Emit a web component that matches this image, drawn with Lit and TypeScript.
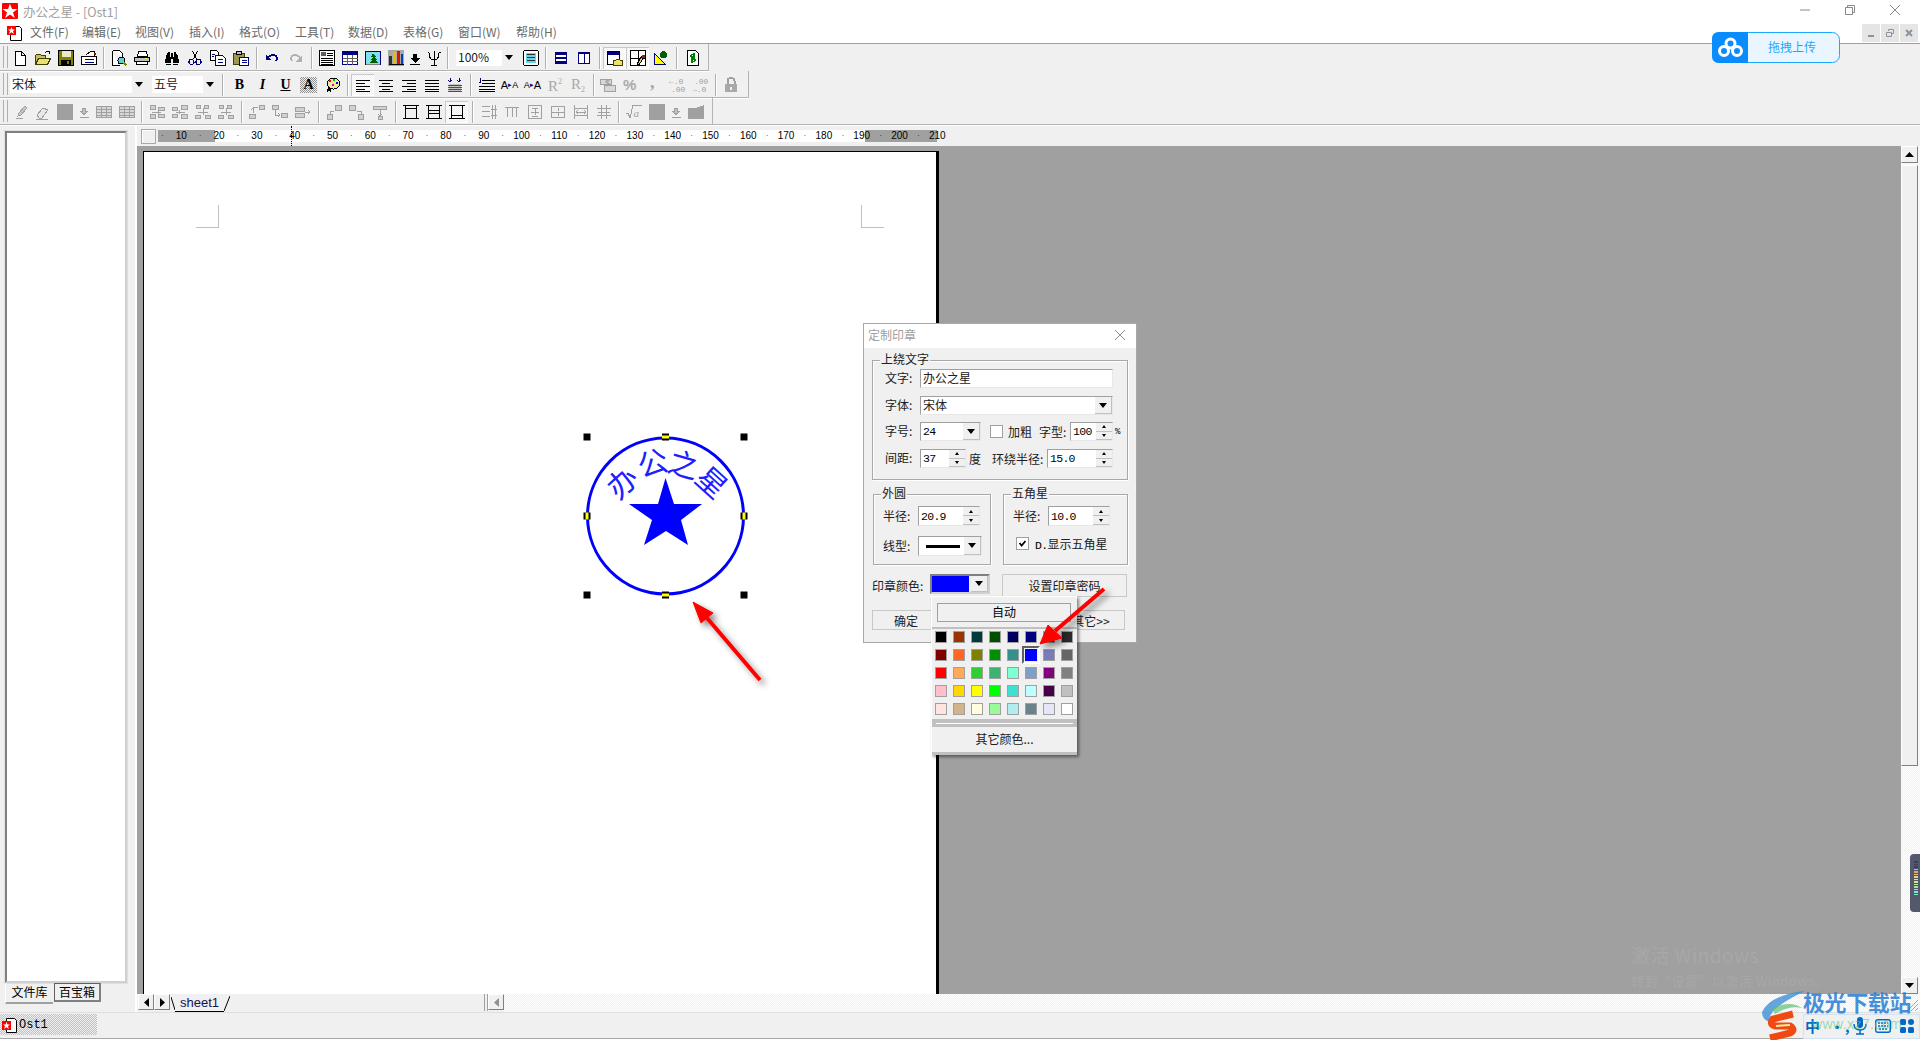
import { LitElement, css, html, svg } from 'lit';
import { customElement } from 'lit/decorators.js';

const dither = css`repeating-conic-gradient(#fff 0 25%, #f0f0f0 0 50%) 0 0 / 2px 2px`;

const ic = (f: unknown) => html`<svg class="ic" viewBox="0 0 16 16" width="16" height="16">${f}</svg>`;

// grey (disabled) icons share one stroke
const dim = (d: string, fill = 'none') => svg`<path d=${d} fill=${fill} stroke="#a0a0a0"/>`;

const I: Record<string, unknown> = {
  new: svg`<path d="M3.5 1.5h6l3.5 3.5v10h-9.5zM9.5 1.5v3.5h3.5" fill="#fff" stroke="#000"/>`,
  open: svg`<path d="M.5 14.5v-9l1-1h4l1 1h4v2" fill="#c8c060" stroke="#404000"/><path d="M.5 14.5l3-6h12l-3 6z" fill="#e8e070" stroke="#404000"/><path d="M9.5 3.5q2-3 4-1M12 1h2v2.500" fill="none" stroke="#000"/>`,
  save: svg`<path d="M.5 .5h15v15h-15z" fill="#808000" stroke="#000"/><path d="M3.500 1h9v6h-9z" fill="#e8e8c8"/><path d="M3 10h10v5h-10z" fill="#000"/><path d="M9 11h2v3h-2z" fill="#808000"/>`,
  setup: svg`<path d="M5.500 4.500l4-3h4v5" fill="#fff" stroke="#000"/><path d="M.5 6.500h15v8h-15z" fill="#fff" stroke="#000"/><path d="M3.500 9.500h9M3.500 12h9" stroke="#000080"/><path d="M13 3h2v2h-2z" fill="#a00000"/>`,
  preview: svg`<path d="M1.500 .5h7l3 3v4M1.500 .5v15h7" fill="#fff" stroke="#000"/><circle cx="10.500" cy="10.500" r="3.500" fill="#60d0d0" stroke="#000"/><path d="M13 13l2.500 2.500" stroke="#808000" stroke-width="2"/>`,
  print: svg`<path d="M4.500 1.500h8l1 5h-10z" fill="#fff" stroke="#000"/><path d="M.5 7.500h15v4h-15z" fill="#c0c0c0" stroke="#000"/><path d="M2.500 11.500h11v3h-11z" fill="#fff" stroke="#000"/><path d="M11 8h2v1h-2z" fill="#ff0"/>`,
  find: svg`<path d="M1 13l1-8h1l1-3h2v5h1V3h2v4h1V2h2l1 3h1l1 8h-6V9h-2v4z" fill="#000"/><path d="M2 14h5M9 14h5" stroke="#000"/>`,
  cut: svg`<path d="M5.500 1l4 8M10.500 1l-4 8" stroke="#000" fill="none"/><circle cx="4.500" cy="12" r="2.500" fill="none" stroke="#000080" stroke-width="1.200"/><circle cx="11.500" cy="12" r="2.500" fill="none" stroke="#000080" stroke-width="1.200"/>`,
  copy: svg`<path d="M.5 .5h6l2 2v8h-8z" fill="#fff" stroke="#000"/><path d="M5.500 5.500h7l2.500 2.500v7.500h-9.500z" fill="#fff" stroke="#000080"/><path d="M7.500 9.500h5M7.500 12.500h5M2 4h3M2 6h2" stroke="#000080"/>`,
  paste: svg`<path d="M.5 3.500h11v11h-11z" fill="#a09850" stroke="#404000"/><path d="M3.500 1.500h5v3h-5z" fill="#c0c0c0" stroke="#000"/><path d="M6.500 7.500h9v8h-9z" fill="#fff" stroke="#000080"/><path d="M8.500 10.500h5M8.500 12.500h5" stroke="#000080"/>`,
  undo: svg`<path d="M3 9q4-6 9-3q2 2 0 5" fill="none" stroke="#000080" stroke-width="1.600"/><path d="M2 4v7h7z" fill="#000080" transform="scale(.8) translate(1 2)"/>`,
  redo: svg`<path d="M13 9q-4-6-9-3q-2 2 0 5" fill="none" stroke="#b0b0b0" stroke-width="1.600"/><path d="M14 4v7h-7z" fill="#b0b0b0" transform="scale(.9) translate(2 2)"/>`,
  text: svg`<path d="M.5 .5h15v15h-15z" fill="#fff" stroke="#000"/><path d="M2 2h5v4h-5z" fill="#606060"/><path d="M8 3h6M8 5h6M2 8h12M2 10h12M2 12h12M2 14h12" stroke="#000"/>`,
  table: svg`<path d="M.5 1.500h15v13h-15z" fill="#fff" stroke="#000080"/><path d="M1 2h14v3h-14z" fill="#000080"/><path d="M.5 8.500h15M.5 11.500h15M5.500 5v10M10.500 5v10" stroke="#606060"/>`,
  pic: svg`<path d="M.5 1.500h15v13h-15z" fill="#80e0f0" stroke="#000080"/><path d="M8 3l3 4h-2l3 3h-2l3 3h-9l3-3h-2l3-3h-2z" fill="#006000"/><path d="M1 14h14" stroke="#808080"/>`,
  chart: svg`<path d="M0 0h16v16h-16z" fill="#a8a8a8"/><path d="M1 6h3v8h-3z" fill="#303030"/><path d="M5 2h3v12h-3z" fill="#e0c000"/><path d="M9 1h3v13h-3z" fill="#e01000"/><path d="M12.500 4h2.500v10h-2.500z" fill="#0040c0"/><path d="M.5 14.500h15" stroke="#000"/>`,
  down: svg`<path d="M6 4h4v4h3l-5 5-5-5h3zM3 14h10v1H3z" fill="#000"/>`,
  psi: svg`<path d="M8 1v14M5 15h6M1.500 2q2 0 2 3q0 5 4.500 5q4.500 0 4.500-5q0-3 2-3" fill="none" stroke="#000"/>`,
  box: svg`<path d="M1.500 .5h13l1 1v13l-1 1h-13l-1-1v-13z" fill="#fff" stroke="#000"/><path d="M3 3h10v10h-10z" fill="#60d8e8"/><path d="M4 4.500h8M4 7.500h8M4 10.500h8" stroke="#303030"/>`,
  rows: svg`<path d="M2.500 2.500h11v11h-11z" fill="#fff" stroke="#000080"/><path d="M2 2h12v3h-12zM2 7h12v2h-12zM2 11h12v3h-12z" fill="#000080"/>`,
  cols: svg`<path d="M2.500 2.500h11v11h-11zM8 3v11" fill="#fff" stroke="#000080"/><path d="M2 2h12v2h-12z" fill="#000080"/>`,
  win: svg`<path d="M.5 1.500h12v13h-12z" fill="#fff" stroke="#000"/><path d="M1 2h11v3h-11z" fill="#000080"/><path d="M6.500 10.500h2l1-1h3l1 1h2v5h-9z" fill="#f0e070" stroke="#404000"/>`,
  pane: svg`<path d="M.5 .5h15v15h-15z" fill="#fff" stroke="#000"/><path d="M8 1v14M1 8h14" stroke="#000"/><path d="M7 14l5-8 2 1-5 8z" fill="#e8d040" stroke="#000"/><path d="M12 5h3v3h-3z" fill="#a02020"/>`,
  tri: svg`<path d="M1.500 3.500v11h11z" fill="#ff0" stroke="#000080"/><circle cx="10.500" cy="4.500" r="3.500" fill="#006000"/>`,
  sync: svg`<path d="M2.500 .5h8l3 3v12h-11z" fill="#fff" stroke="#000"/><path d="M5 7q1-3 4-2M9 3v4h-3M11 9q-1 3-4 2M7 13v-4h3" fill="none" stroke="#008000" stroke-width="1.300"/>`,
  palette: svg`<ellipse cx="9.500" cy="6.500" rx="6" ry="5.500" fill="#f0e8a0" stroke="#000"/><path d="M5 3h2v2h-2z" fill="#f00"/><path d="M9 2h2v2h-2z" fill="#00c000"/><path d="M12 5h2v2h-2z" fill="#00f"/><path d="M8 7h2v2h-2z" fill="#e000e0"/><path d="M3 15l2-5 2 5M3.500 13.500h3" fill="none" stroke="#000"/>`,
  left: svg`<path d="M1 3h14M1 6h9M1 9h14M1 12h9M1 14.500h14" stroke="#000"/>`,
  center: svg`<path d="M1 3h14M4 6h8M1 9h14M4 12h8M1 14.500h14" stroke="#000"/>`,
  right: svg`<path d="M1 3h14M6 6h9M1 9h14M6 12h9M1 14.500h14" stroke="#000"/>`,
  just: svg`<path d="M1 3h14M1 6h14M1 9h14M1 12h14M1 14.500h14" stroke="#000"/>`,
  dist: svg`<path d="M2 7h12v8h-12z" fill="#c0c0c0"/><path d="M1 8h14M1 10h14M1 12h14M1 14h14" stroke="#505050"/><path d="M3 1v4M1.500 3.500l1.500 1.500 1.500-1.500M12 1v4M10.500 3.500l1.500 1.500 1.500-1.500" fill="none" stroke="#000080"/>`,
  lines: svg`<path d="M1 1v5M0 5l1 1 1-1" fill="none" stroke="#000080"/><path d="M3 3h13M3 6h13M0 9h16M0 12h16M0 14.500h16" stroke="#000"/>`,
  pen: dim('M2 14h7M4 12l1-3 6-7 2 2-6 7z', '#c8c8c8'),
  erase: dim('M2 11l6-7 5 2-6 8h-3zM1 15h12', '#e8e8e8'),
  sq: svg`<path d="M0 0h16v16h-16z" fill="#a0a0a0"/>`,
  ddown: dim('M6.500 4.500h3v3h2l-3.500 3-3.500-3h2zM3.500 13.500h9', '#c0c0c0'),
  grid1: svg`${dim('M.5 2.500h15v11h-15z', '#d8d8d8')}${dim('M.5 5.500h15M.5 8.500h15M.5 11.500h15M5.500 2v12M10.500 2v12')}`,
  m1: svg`${dim('M1.500 1.500h5v4h-5zM1.500 10.500h5v4h-5zM9.500 3.500h6v3h-6zM9.500 10.500h6v3h-6z', '#d0d0d0')}${dim('M3 8h9M9 6v4')}`,
  m2: svg`${dim('M.5 3.500h5v3h-5zM.5 10.500h5v3h-5zM9.500 1.500h6v4h-6zM9.500 10.500h6v4h-6z', '#d0d0d0')}${dim('M4 8h9M7 6v4')}`,
  m3: svg`${dim('M1.500 1.500h4v3h-4zM9.500 1.500h4v3h-4zM.5 11.500h5v3h-5zM10.500 11.500h5v3h-5z', '#d0d0d0')}${dim('M8 4v7M3 8h10')}`,
  a1: svg`${dim('M10.500 1.500h5v4h-5zM.5 10.500h6v4h-6z', '#d0d0d0')}${dim('M9 3h-5v6M2.500 6l1.500-2')}`,
  a2: svg`${dim('M.5 1.500h6v4h-6zM9.500 9.500h6v4h-6z', '#d0d0d0')}${dim('M3 6v5h5M6 9l2 2-2 2')}`,
  a3: svg`${dim('M.5 3.500h9v4h-9zM.5 9.500h9v4h-9z', '#d0d0d0')}${dim('M10 8h5M13 6l2 2-2 2')}`,
  sp1: svg`${dim('M9.500 1.500h6v5h-6zM1.500 10.500h5v5h-5z', '#d0d0d0')}${dim('M4 10V7h4')}`,
  sp2: svg`${dim('M.5 1.500h6v5h-6zM9.500 10.500h5v5h-5z', '#d0d0d0')}${dim('M12 10V7h-4')}`,
  sp3: svg`${dim('M1.500 2.500h13v3h-13zM6.500 12.500h4v3h-4z', '#d0d0d0')}${dim('M8 6v6M6 10l2 2 2-2')}`,
  fr1: svg`<path d="M2.500 1.500h11v13h-11zM0 1.500h16M0 14.500h16M2.500 4.500h11" fill="none" stroke="#000"/>`,
  fr2: svg`<path d="M2.500 1.500h11v13h-11zM0 1.500h16M0 14.500h16M2.500 6.500h11M2.500 9.500h11" fill="none" stroke="#000"/>`,
  fr3: svg`<path d="M2.500 1.500h11v13h-11zM0 1.500h16M0 14.500h16M2.500 11.500h11" fill="none" stroke="#000"/>`,
  t1: svg`${dim('M1 2.500h8M1 7.500h8M1 12.500h8M11.500 1v14M14.500 1v14M10 5h6M10 11h6')}`,
  t2: svg`${dim('M1 3.500h14M3.500 3v10M8 3v10M12.500 3v10')}`,
  t3: svg`${dim('M1 1.500h14M1 14.500h14M1.500 1v14M14.500 1v14M4 8h8M8 5v6M5 4h6M5 12h6')}`,
  t4: svg`${dim('M1 2.500h14M1 13.500h14M1.500 2v12M14.500 2v12M1 8h14M8 4v3M8 9v3')}`,
  t5: svg`${dim('M1.500 1v14M14.500 1v14M1 4.500h14M1 11.500h14M3 8h10M5 6l-2 2 2 2M11 6l2 2-2 2')}`,
  t6: svg`${dim('M1 4.500h14M1 11.500h14M5.500 1v14M10.500 1v14M2 8h12')}`,
  sqrt: svg`${dim('M0 10l2-1 2 5 3-13h9')}<text x="7.500" y="13" font-size="11" font-style="italic" font-family="Liberation Serif" fill="#a0a0a0">a</text>`,
  clip: svg`<path d="M0 4h8l8-3v3h0v11h-16z" fill="#a0a0a0"/>`,
  lock: svg`<path d="M4.500 7V4q0-3 3.500-3t3.500 3v3" fill="none" stroke="#a0a0a0" stroke-width="2"/><path d="M2 7h12v8h-12z" fill="#a8a8a8"/><path d="M7 10h2v3h-2z" fill="#f0f0f0"/>`,
  R2u: svg`<text x="0" y="14" font-size="15" font-family="Liberation Serif" fill="#a8a8a8">R</text><text x="10" y="7" font-size="8" font-family="Liberation Serif" fill="#a8a8a8">2</text>`,
  R2d: svg`<text x="0" y="12" font-size="15" font-family="Liberation Serif" fill="#a8a8a8">R</text><text x="10" y="15" font-size="8" font-family="Liberation Serif" fill="#a8a8a8">2</text>`,
  coin: svg`${dim('M.5 2.500h11v5h-11zM4.500 8.500h11v6h-11z', '#d8d8d8')}<text x="5" y="9" font-size="9" font-family="Liberation Sans" fill="#a0a0a0" font-weight="700">$</text>`,
  pct: svg`<text x="0" y="13" font-size="15" font-weight="700" font-family="Liberation Sans" fill="#a8a8a8">%</text>`,
  comma: svg`<text x="4" y="11" font-size="18" font-weight="700" font-family="Liberation Serif" fill="#a8a8a8">,</text>`,
  inc: svg`<text x="0" y="7" font-size="8" font-family="Liberation Mono" fill="#a0a0a0">←.0</text><text x="2" y="15" font-size="8" font-family="Liberation Mono" fill="#a0a0a0">.00</text>`,
  dec: svg`<text x="2" y="7" font-size="8" font-family="Liberation Mono" fill="#a0a0a0">.00</text><text x="0" y="15" font-size="8" font-family="Liberation Mono" fill="#a0a0a0">→.0</text>`,
};

const STAR = '8,0.8 10,6 15.4,6 11,9.400 12.800,15 8,11.600 3.200,15 5,9.400 0.600,6 6,6';

const SWATCHES = [
  '#000000', '#993300', '#003c3c', '#005000', '#000060', '#000080', '#333399', '#2a2a2a',
  '#800000', '#ff6625', '#808000', '#008f00', '#368f8f', '#0000ff', '#7b7bbb', '#666666',
  '#ff0000', '#ffa858', '#32cd32', '#3cb371', '#7fffd4', '#7f9fc4', '#800080', '#808080',
  '#ffc0cb', '#ffd700', '#ffff00', '#00ff00', '#40e0d0', '#bbffff', '#480048', '#c0c0c0',
  '#ffe4e1', '#d2b48c', '#ffffe0', '#98fb98', '#afeeee', '#68838b', '#e6e6fa', '#ffffff',
];

const MENUS: [string, number][] = [
  ['文件(F)', 52], ['编辑(E)', 53], ['视图(V)', 54], ['插入(I)', 50], ['格式(O)', 56],
  ['工具(T)', 53], ['数据(D)', 55], ['表格(G)', 55], ['窗口(W)', 58], ['帮助(H)', 50],
];

@customElement('stamp-dialog')
export class StampDialog extends LitElement {
  static styles = css`
    :host {
      position: absolute;
      left: 863px;
      top: 323px;
      width: 274px;
      height: 320px;
      box-sizing: border-box;
      display: block;
      background: #f0f0f0;
      border: 1px solid #a8a8a8;
      font: 12px/19px "Noto Sans CJK SC", "Liberation Sans", sans-serif;
      color: #202020;
    }
    .title {
      height: 24px;
      background: #fff;
      display: flex;
      align-items: center;
      justify-content: space-between;
      padding: 0 11px 3px 4px;
      box-sizing: border-box;
      color: #a0a0a0;
    }
    .body { padding: 12px 8px 0; }
    .group {
      position: relative;
      box-sizing: border-box;
      border: 1px solid #a8a8a8;
      box-shadow: inset 1px 1px 0 #fff, 1px 1px 0 #fff;
    }
    .legend {
      position: absolute;
      top: -12px;
      left: 7px;
      padding: 0 1px;
      background: #f0f0f0;
    }
    .g1 { height: 120px; padding: 8px 0 0 12px; }
    .row { display: flex; align-items: center; height: 19px; margin-bottom: 8px; }
    .lbl { width: 35px; flex: none; position: relative; top: -1px; }
    .field {
      box-sizing: border-box;
      height: 100%;
      background: #fff;
      border: 1px solid #c8c8c8;
      border-color: #a0a0a0 #e8e8e8 #e8e8e8 #a0a0a0;
      display: flex;
      align-items: center;
      padding-left: 2px;
      flex: none;
    }
    .val { position: relative; top: -1px; }
    .num { font: 11.500px "Liberation Mono", monospace; letter-spacing: -.7px; color: #000; }
    .fill { flex: 1; }
    .dd {
      width: 17px;
      height: 100%;
      background: #f0f0f0;
      display: flex;
      align-items: center;
      justify-content: center;
      border-right: 1px solid #c0c0c0;
      border-bottom: 1px solid #c0c0c0;
      box-sizing: border-box;
    }
    .down { width: 0; height: 0; border: 4px solid transparent; border-top: 5px solid #000; border-bottom: 0; }
    .spin { width: 16px; height: 100%; display: flex; flex-direction: column; background: #f0f0f0; }
    .spin span { flex: 1; display: flex; align-items: center; justify-content: center; border-bottom: 1px solid #c0c0c0; }
    .up-s { width: 0; height: 0; border: 2px solid transparent; border-bottom: 3px solid #000; border-top: 0; }
    .dn-s { width: 0; height: 0; border: 2px solid transparent; border-top: 3px solid #000; border-bottom: 0; }
    .check { width: 13px; height: 13px; box-sizing: border-box; background: #fff; border: 1px solid #a0a0a0; flex: none; }
    .two { display: flex; gap: 12px; margin-top: 14px; padding-left: 1px; }
    .outer { width: 118px; height: 71px; padding: 11px 0 0 9px; }
    .star { width: 125px; height: 71px; padding: 11px 0 0 9px; }
    .two .row { height: 20px; margin-bottom: 10px; }
    .two .show { margin-top: -3px; padding-left: 3px; }
    .show span { margin-left: 6px; }
    .colors { display: flex; margin-top: 9px; height: 23px; }
    .cbtn {
      width: 60px;
      height: 20px;
      box-sizing: border-box;
      display: flex;
      border: 2px solid;
      border-color: #808080 #d0d0d0 #d0d0d0 #808080;
      background: #f0f0f0;
      margin-right: 12px;
    }
    .blue { width: 38px; background: #00f; margin-right: 2px; }
    .btn {
      box-sizing: border-box;
      display: flex;
      align-items: center;
      justify-content: center;
      background: #f0f0f0;
      border: 1px solid;
      border-color: #fff #a0a0a0 #a0a0a0 #fff;
      outline: 1px solid #c8c8c8;
      outline-offset: -1px;
    }
    .actions { display: flex; justify-content: space-between; margin-top: 13px; width: 253px; }
    .actions .btn { width: 68px; height: 20px; }
    svg { display: block; }
  `;

  private spin() {
    return html`<div class="spin"><span><i class="up-s"></i></span><span><i class="dn-s"></i></span></div>`;
  }

  render() {
    return html`
      <div class="title">
        <span>定制印章</span>
        <svg width="10" height="10" viewBox="0 0 10 10"><path d="M0 0l10 10M10 0L0 10" stroke="#909090" /></svg>
      </div>
      <div class="body">
        <div class="group g1">
          <div class="legend">上绕文字</div>
          <div class="row">
            <span class="lbl">文字:</span>
            <div class="field" style="width:193px"><span class="val">办公之星</span></div>
          </div>
          <div class="row" style="margin-bottom:7px">
            <span class="lbl">字体:</span>
            <div class="field" style="width:193px"><span class="fill val">宋体</span><div class="dd"><i class="down"></i></div></div>
          </div>
          <div class="row">
            <span class="lbl">字号:</span>
            <div class="field" style="width:61px"><span class="fill num">24</span><div class="dd"><i class="down"></i></div></div>
            <div class="check" style="margin:0 5px 0 9px"></div>
            <span style="width:31px">加粗</span>
            <span style="width:31px">字型:</span>
            <div class="field" style="width:43px"><span class="fill num">100</span>${this.spin()}</div>
            <span class="num" style="font-size:9px;margin-left:2px">%</span>
          </div>
          <div class="row">
            <span class="lbl">间距:</span>
            <div class="field" style="width:46px"><span class="fill num">37</span>${this.spin()}</div>
            <span style="margin-left:3px;width:23px">度</span>
            <span style="width:55px">环绕半径:</span>
            <div class="field" style="width:66px"><span class="fill num">15.0</span>${this.spin()}</div>
          </div>
        </div>
        <div class="two">
          <div class="group outer">
            <div class="legend">外圆</div>
            <div class="row">
              <span class="lbl">半径:</span>
              <div class="field" style="width:62px"><span class="fill num">20.9</span>${this.spin()}</div>
            </div>
            <div class="row">
              <span class="lbl">线型:</span>
              <div class="field" style="width:64px">
                <span class="fill"><svg width="38" height="3" style="margin-left:5px"><rect width="34" height="3" /></svg></span>
                <div class="dd"><i class="down"></i></div>
              </div>
            </div>
          </div>
          <div class="group star">
            <div class="legend">五角星</div>
            <div class="row">
              <span class="lbl">半径:</span>
              <div class="field" style="width:62px"><span class="fill num">10.0</span>${this.spin()}</div>
            </div>
            <div class="row show">
              <svg class="check" viewBox="0 0 13 13"><path d="M3 6l2.500 3L10 3.500" fill="none" stroke="#000" stroke-width="2" /></svg>
              <span><b class="num" style="font-weight:400">D.</b>显示五角星</span>
            </div>
          </div>
        </div>
        <div class="colors">
          <span style="width:58px;line-height:23px">印章颜色:</span>
          <div class="cbtn">
            <div class="blue"></div>
            <div class="dd"><i class="down"></i></div>
          </div>
          <div class="btn" style="width:125px;height:23px">设置印章密码</div>
        </div>
        <div class="actions">
          <div class="btn">确定</div>
          <div class="btn">其它>></div>
        </div>
      </div>
    `;
  }
}

@customElement('app-root')
export class AppRoot extends LitElement {
  static styles = css`
    :host {
      display: block;
      position: relative;
      width: 1920px;
      height: 1040px;
      overflow: hidden;
      background: #fff;
      font: 12px/1.2 "Noto Sans CJK SC", "Liberation Sans", sans-serif;
      color: #000;
    }
    .app { display: flex; flex-direction: column; height: 100%; }
    .titlebar { height: 22px; display: flex; align-items: center; padding-left: 2px; color: #a0a0a0; font-size: 12.500px; gap: 4px; flex: none; }
    .win-btns { margin-left: auto; display: flex; gap: 35px; padding: 0 20px 2px 0; }
    .menubar { height: 21px; display: flex; align-items: center; color: #6a6a6a; padding-left: 7px; flex: none; border-bottom: 1px solid #a0a0a0; position: relative; }
    .menubar > svg { margin-right: 7px; }
    .menu { flex: none; }
    .mdi { position: absolute; right: 2px; top: 2px; display: flex; gap: 1px; }
    .mdi span { width: 18px; height: 18px; background: #e5e5e5; display: flex; align-items: center; justify-content: center; }
    .bars { background: #f0f0f0; flex: none; border-bottom: 1px solid #808080; }
    .bar { height: 27px; display: flex; align-items: center; box-sizing: border-box; position: relative; }
    .bar::after { content: ""; position: absolute; left: 0; bottom: 0; height: 1px; width: var(--end); background: #b4b4b4; box-shadow: 0 1px 0 #fff; }
    .grip { position: absolute; left: 3px; top: 2px; bottom: 3px; width: 3px; border-left: 1px solid #b0b0b0; border-right: 1px solid #b0b0b0; }
    .end { position: absolute; top: 0; bottom: 0; width: 1px; background: #b4b4b4; }
    .tb { height: 22px; display: flex; align-items: center; justify-content: center; flex: none; box-sizing: border-box; }
    .tb.on { background: ${dither}; box-shadow: inset 1px 1px 0 #c8c8c8, inset -1px -1px 0 #fff; }
    .ic { display: block; shape-rendering: crispEdges; overflow: visible; }
    .txt { font: 700 14px "Liberation Serif", serif; }
    .sep { flex: none; display: flex; justify-content: center; height: 22px; }
    .sep i { width: 1px; background: #b0b0b0; box-shadow: 1px 0 0 #fff; }
    .combo { height: 16px; background: #fff; display: flex; align-items: center; flex: none; box-sizing: border-box; padding-left: 2px; color: #202020; }
    .combo span { flex: 1; }
    .combo b { width: 14px; height: 100%; background: #f0f0f0; display: flex; align-items: center; justify-content: center; }
    .combo b::after { content: ""; border: 4px solid transparent; border-top: 5px solid #000; border-bottom: 0; }
    .work { flex: 1; display: flex; min-height: 0; }
    .side { width: 130px; flex: none; background: #f0f0f0; border-right: 2px solid #fff; box-shadow: 1px 0 0 #c8c8c8; padding: 5px 0 0 5px; display: flex; flex-direction: column; }
    .tree { width: 122px; height: 852px; box-sizing: border-box; background: #fff; border: 2px solid #808080; border-right-color: #d0d0d0; border-bottom-color: #d0d0d0; outline: 1px solid #e0e0e0; }
    .stabs { display: flex; font-size: 12px; }
    .stab { width: 48px; height: 21px; display: flex; align-items: center; justify-content: center; border-left: 1px solid #fff; border-bottom: 2px solid #a0a0a0; box-sizing: border-box; }
    .stab.off { width: 47px; height: 19px; background: #f0f0f0; border: 1px solid #606060; border-right-width: 2px; border-bottom-width: 2px; border-bottom-color: #808080; border-right-color: #808080; margin-left: 1px; }
    .main { flex: 1; display: flex; flex-direction: column; min-width: 0; }
    .ruler { height: 20px; flex: none; background: #f0f0f0; position: relative; }
    .corner { position: absolute; left: 4px; top: 3px; width: 13px; height: 13px; border: 1px solid #a8a8a8; box-shadow: inset 1px 1px 0 #fff; }
    .strip { position: absolute; top: 4px; height: 12px; background: #fff; left: 78px; width: 650px; }
    .strip.g { background: #a0a0a0; }
    .tick { position: absolute; top: 4px; font: 10px/12px "Liberation Sans", sans-serif; transform: translateX(-50%); color: #000; }
    .cursor { position: absolute; top: 0; bottom: 0; left: 154px; border-left: 1px dotted #000; }
    .canvas { flex: 1; min-height: 0; display: flex; }
    .doc { flex: 1; background: #a0a0a0; padding: 5px 0 0 6px; min-width: 0; }
    .page { position: relative; width: 792px; height: 843px; background: #fff; border-top: 1px solid #000; border-left: 1px solid #000; border-right: 3px solid #000; }
    .mark { position: absolute; width: 22px; height: 22px; border: 0 solid #c0c0c0; }
    .mark.l { left: 52px; top: 53px; border-right-width: 1px; border-bottom-width: 1px; }
    .mark.r { left: 717px; top: 53px; border-left-width: 1px; border-bottom-width: 1px; }
    .stamp { position: absolute; left: 436px; top: 278px; display: block; }
    .vs { width: 19px; flex: none; display: flex; flex-direction: column; background: ${dither}; }
    .sb { height: 17px; width: 17px; box-sizing: border-box; background: #f0f0f0; border: 1px solid; border-color: #fff #808080 #808080 #fff; display: flex; align-items: center; justify-content: center; flex: none; }
    .thumb { height: 601px; margin: 2px 0; background: #f0f0f0; border: 1px solid; border-color: #fff #808080 #808080 #fff; width: 17px; box-sizing: border-box; flex: none; }
    .fillup { flex: 1; }
    .tabs { height: 18px; flex: none; display: flex; background: ${dither}; position: relative; }
    .tabs-l { width: 366px; height: 18px; background: #f0f0f0; display: flex; align-items: flex-start; padding-left: 1px; flex: none; }
    .hb { width: 16px; height: 16px; background: #f0f0f0; box-sizing: border-box; border: 1px solid; border-color: #fff #808080 #808080 #fff; display: flex; align-items: center; justify-content: center; flex: none; }
    .sheet { height: 17px; color: #101050; font: 13px/18px "Liberation Sans", sans-serif; padding: 0 5px; border-bottom: 1px solid #000; }
    .slash { margin-left: 1px; }
    .hgrip { width: 4px; height: 17px; border: 1px solid #a0a0a0; border-width: 0 1px; box-sizing: border-box; }
    .grow { flex: 1; }
    .grip-r { position: absolute; right: 2px; bottom: 1px; }
    .status { height: 27px; flex: none; background: #f0f0f0; box-sizing: border-box; border-bottom: 1px solid #a8a8a8; margin-bottom: 1px; border-top: 1px solid #e0e0e0; padding-top: 1px; }
    .task { width: 97px; height: 21px; background: repeating-conic-gradient(#c0c0c0 0 25%, #f0f0f0 0 50%) 0 0 / 2px 2px; display: flex; align-items: center; padding-left: 2px; box-sizing: border-box; font: 12px "Liberation Mono", monospace; gap: 1px; }
    .popup { position: absolute; left: 931px; top: 596px; width: 146px; height: 159px; box-sizing: border-box; background: #f0f0f0; box-shadow: 2px 2px 3px rgba(0, 0, 0, 0.45); padding-top: 7px; display: flex; flex-direction: column; border-left: 1px solid #fff; border-top: 1px solid #fff; }
    .auto { margin-left: 5px; width: 134px; height: 19px; box-sizing: border-box; border: 1px solid #a0a0a0; display: flex; align-items: center; justify-content: center; flex: none; margin-top: -1px; }
    .hr { height: 2px; background: #c0c0c0; margin-top: 5px; flex: none; }
    .sw { display: grid; grid-template-columns: repeat(8, 12px); grid-auto-rows: 12px; gap: 6px; margin: 2px 0 0 3px; flex: none; }
    .sw i { box-sizing: border-box; border: 1px solid #a0a0a0; display: block; position: relative; }
    .sw i.sel { border: none; }
    .sw i.sel::after { content: ""; position: absolute; inset: -3px; border: 2px solid; border-color: #606060 #fff #fff #606060; }
    .band { height: 8px; background: #c0c0c0; margin-top: 4px; display: flex; align-items: center; padding: 0 4px; flex: none; }
    .band i { flex: 1; height: 1px; background: #fff; }
    .more { flex: 1; display: flex; align-items: center; justify-content: center; border-bottom: 3px solid #c0c0c0; color: #202020; }
    .upload { position: absolute; left: 1712px; top: 32px; display: block; }
    .layer { position: absolute; left: 0; top: 0; pointer-events: none; }
    .activate { position: absolute; left: 1631px; top: 945px; color: rgba(255, 255, 255, 0.1); line-height: 1; }
    .activate p { margin: 0; font-size: 19px; letter-spacing: .5px; }
    .activate p + p { font-size: 13px; margin-top: 10px; }
    .meter { position: absolute; left: 1910px; top: 854px; width: 14px; height: 58px; background: #53586c; border-radius: 4px; display: flex; flex-direction: column; gap: 1px; padding: 7px 0 0 4px; box-sizing: border-box; }
    .meter i { width: 4px; height: 1.500px; }
    .brand { position: absolute; left: 1803px; top: 989px; font: 700 22px/24px "Noto Sans CJK SC", sans-serif; color: rgba(30, 120, 210, 0.82); letter-spacing: -.4px; }
    .site { position: absolute; left: 1812px; top: 1015px; font: 14px/18px "Liberation Sans", sans-serif; letter-spacing: .4px; color: rgba(90, 200, 130, 0.6); }
    .ime { position: absolute; left: 1803px; top: 1014px; width: 117px; height: 25px; box-sizing: border-box; border: 1px solid #cfe3f5; display: flex; align-items: center; padding: 0 0 2px 1px; color: #0068c8; font: 700 15px/18px "Noto Sans CJK SC", sans-serif; }
    .ime svg { flex: none; }
    .ime .dots { font-size: 14px; margin-left: 10px; width: 16px; letter-spacing: 1px; }
    .ime .mic { margin-left: 7px; }
    .ime .keys { margin-left: 8px; }
    .ime .apps { margin-left: 9px; }
  `;

  private sep(w = 7) {
    return html`<div class="sep" style="width:${w}px"><i></i></div>`;
  }

  private tb(name: string, w = 23, on = false) {
    return html`<div class="tb ${on ? 'on' : ''}" style="width:${w}px">${ic(I[name])}</div>`;
  }

  private letter(t: string, extra = '') {
    return html`<div class="tb" style="width:23px"><span class="txt" style=${extra}>${t}</span></div>`;
  }

  private tinyA(big: number, small: number) {
    return html`<div class="tb" style="width:23px">
      <span style="font:${big}px 'Liberation Sans'">A</span><span style="color:#000080;font-size:7px">▸</span><span style="font:${small}px 'Liberation Sans'">A</span>
    </div>`;
  }

  private toolbarOne() {
    return html`<div class="bar" style="--end:709px;padding-left:8px">
      <i class="grip"></i><i class="end" style="left:708px"></i>
      ${this.tb('new')}${this.tb('open')}${this.tb('save')}${this.tb('setup')}${this.sep()}
      ${this.tb('preview')}${this.tb('print')}${this.sep()}
      ${this.tb('find')}${this.tb('cut')}${this.tb('copy')}${this.tb('paste')}${this.sep(8)}
      ${this.tb('undo', 24)}${this.tb('redo', 24)}${this.sep()}
      ${this.tb('text')}${this.tb('table')}${this.tb('pic')}${this.tb('chart')}
      ${this.tb('down', 16)}${this.tb('psi', 21)}${this.sep()}
      <div class="combo" style="width:60px;margin:0 3px 0 5px"><span>100%</span><b></b></div>
      ${this.tb('box')}${this.sep()}
      ${this.tb('rows')}${this.tb('cols')}${this.sep(8)}
      ${this.tb('win', 23, true)}${this.tb('pane', 23, true)}${this.tb('tri')}${this.sep(9)}
      ${this.tb('sync')}
    </div>`;
  }

  private toolbarTwo() {
    return html`<div class="bar" style="--end:749px;padding-left:10px">
      <i class="grip"></i><i class="end" style="left:748px"></i>
      <div class="combo" style="width:136px;margin-right:6px;height:17px"><span>宋体</span><b></b></div>
      <div class="combo" style="width:65px;height:17px"><span>五号</span><b></b></div>
      ${this.sep(11)}
      ${this.letter('B')}${this.letter('I', 'font-style:italic')}${this.letter('U', 'text-decoration:underline')}
      <div class="tb" style="width:23px"><span class="txt" style="padding:0 3px;background:repeating-conic-gradient(#909090 0 25%,#f0f0f0 0 50%) 0 0/2px 2px">A</span></div>
      ${this.tb('palette')}${this.sep(8)}
      ${this.tb('left', 23, true)}${this.tb('center')}${this.tb('right')}${this.tb('just')}${this.tb('dist')}${this.sep(9)}
      ${this.tb('lines')}${this.tinyA(11, 9)}${this.tinyA(9, 11)}${this.tb('R2u')}${this.tb('R2d')}${this.sep(6)}
      ${this.tb('coin')}${this.tb('pct')}${this.tb('comma')}${this.tb('inc')}${this.tb('dec')}${this.sep(8)}
      ${this.tb('lock')}
    </div>`;
  }

  private toolbarThree() {
    return html`<div class="bar" style="--end:100%;padding-left:10px">
      <i class="grip"></i><i class="end" style="left:712px"></i>
      ${this.tb('pen')}${this.tb('erase', 20)}${this.tb('sq')}${this.tb('ddown', 16)}${this.tb('grid1')}${this.tb('grid1')}${this.sep()}
      ${this.tb('m1')}${this.tb('m2')}${this.tb('m3')}${this.tb('m3')}${this.sep(8)}
      ${this.tb('a1')}${this.tb('a2')}${this.tb('a3')}${this.sep(8)}
      ${this.tb('sp1')}${this.tb('sp2')}${this.tb('sp3')}${this.sep(8)}
      ${this.tb('fr1')}${this.tb('fr2')}${this.tb('fr3', 23, true)}${this.sep(9)}
      ${this.tb('t1')}${this.tb('t2')}${this.tb('t3')}${this.tb('t4')}${this.tb('t5')}${this.tb('t6')}${this.sep()}
      ${this.tb('sqrt')}${this.tb('sq')}${this.tb('ddown', 16)}${this.tb('clip')}
    </div>`;
  }

  private ruler() {
    const ticks = [];
    for (let n = 5; n <= 210; n += 5) {
      const x = 6.5 + 3.78 * n;
      ticks.push(
        n % 10 === 0
          ? html`<span class="tick" style="left:${x}px">${n}</span>`
          : html`<span class="tick" style="left:${x}px;font-size:7px">·</span>`
      );
    }
    return html`<div class="ruler">
      <div class="corner"></div>
      <div class="strip"></div>
      <div class="strip g" style="left:21px;width:57px"></div>
      <div class="strip g" style="left:728px;width:72px"></div>
      ${ticks}
      <i class="cursor"></i>
    </div>`;
  }

  private stamp() {
    const glyphs: [string, number, number, number][] = [
      ['办', 41, 51, -42],
      ['公', 72, 31, -16],
      ['之', 104, 33, 16],
      ['星', 133, 51, 42],
    ];
    const handles = [[7, 7], [85.5, 7], [164, 7], [7, 86], [164, 86], [7, 165], [85.5, 165], [164, 165]];
    return html`<svg class="stamp" width="172" height="172" viewBox="0 0 172 172">
      <circle cx="85.500" cy="86" r="78" fill="none" stroke="#00f" stroke-width="3" />
      <polygon points="85.500,48 94,74 122,74 101,90 108,115 86,101 64,115 72,90 49,74 78,74" fill="#00f" />
      ${glyphs.map(
        ([c, x, y, a]) => svg`<text transform="translate(${x} ${y}) rotate(${a})" text-anchor="middle" dominant-baseline="central"
          font-size="30" font-family="Noto Sans CJK SC" fill="#2020ff">${c}</text>`
      )}
      ${handles.map(([x, y], i) => {
        const side = i === 3 || i === 4;
        const mid = side || i === 1 || i === 6;
        return svg`<rect x=${x - 3.5} y=${y - 3.5} width="7" height="7" fill="#000" />
          ${mid ? svg`<rect x=${side ? x - 1.5 : x - 3.5} y=${side ? y - 3.5 : y - 1.5} width=${side ? 3 : 7} height=${side ? 7 : 3} fill="#ff0" />` : ''}`;
      })}
    </svg>`;
  }

  private overlays() {
    const meter = ['#3a3f55', '#3a3f55', '#3a3f55', '#e8a080', '#e8a080', '#e8c070', '#e8d870', '#e8e070', '#d8e880', '#c0e890', '#a0e8a0', '#90e8b0', '#80e8c0', '#80e8c8'];
    return html`
      <div class="activate"><p>激活 Windows</p><p>转到“设置”以激活 Windows。</p></div>
      <div class="meter">${meter.map((c) => html`<i style="background:${c}"></i>`)}</div>
      <svg class="layer" width="1920" height="1040">
        <defs>
          <filter id="sh" x="-30%" y="-30%" width="170%" height="170%">
            <feDropShadow dx="4" dy="4" stdDeviation="3" flood-color="#000" flood-opacity=".45" />
          </filter>
        </defs>
        <g fill="#f00" stroke="#f00" filter="url(#sh)">
          <path d="M707 618L760 680" stroke-width="4" />
          <path d="M693 602l20 11-12 10z" stroke-width="1" />
        </g>
        <g fill="#f00" stroke="#f00" filter="url(#sh)">
          <path d="M1055 631L1104 589" stroke-width="4" />
          <path d="M1040 644l8-19 14 13z" stroke-width="1" />
        </g>
        <!-- download-site watermark -->
        <path d="M1805 991Q1770 995 1762 1012Q1762 1020 1770 1022Q1765 1010 1805 991z" fill="#3f8fd8" opacity=".8" />
        <path d="M1772 1008Q1790 1000 1802 1008Q1790 1005 1775 1014z" fill="#60c070" opacity=".7" />
        <path d="M1793 1014L1773 1019Q1769 1024 1775 1026L1790 1026Q1796 1030 1790 1033L1770 1038" fill="none" stroke="#f04a10" stroke-width="7" />
        <path d="M1776 1026l14-1" stroke="#f8f0a0" stroke-width="2" />
      </svg>
      <div class="brand">极光下载站</div>
      <div class="ime">
        <span>中</span>
        <span class="dots">•,</span>
        <svg class="mic" width="14" height="18" viewBox="0 0 14 18"><rect x="4" y="0" width="6" height="11" rx="3" fill="#0068c8" /><path d="M1 7q0 6 6 6t6-6M7 13v4M3 17h8" fill="none" stroke="#0068c8" stroke-width="1.500" /></svg>
        <svg class="keys" width="16" height="14" viewBox="0 0 16 14"><rect x=".7" y=".7" width="14.600" height="12.600" rx="2" fill="none" stroke="#0068c8" stroke-width="1.400" /><path d="M3 4h10M3 7h10M4 10h8" stroke="#0068c8" stroke-dasharray="2 1" stroke-width="1.500" /></svg>
        <svg class="apps" width="14" height="14" viewBox="0 0 14 14" fill="#0068c8"><rect width="6" height="6" rx="1.500" /><rect x="8" width="6" height="6" rx="3" /><rect y="8" width="6" height="6" rx="1.500" /><rect x="8" y="8" width="6" height="6" rx="1.500" /></svg>
      </div>
      <div class="site">www.xz7.com</div>
    `;
  }

  private upload() {
    return html`<svg class="upload" width="129" height="32" viewBox="0 0 129 32">
      <rect x=".5" y=".5" width="127" height="30" rx="7" fill="#eaf6ff" stroke="#1ea7ff" />
      <path d="M7 0h29v31H7q-7 0-7-7V7q0-7 7-7z" fill="#0a8cff" />
      <g fill="none" stroke="#fff" stroke-width="3"><circle cx="18.500" cy="11.500" r="4.500" /><circle cx="12" cy="19" r="4.500" /><circle cx="25" cy="19" r="4.500" /></g>
      <text x="80" y="20" text-anchor="middle" font-size="12" font-family="Noto Sans CJK SC" fill="#1ea7ff">拖拽上传</text>
    </svg>`;
  }

  render() {
    return html`
      <div class="app">
        <div class="titlebar">
          <svg width="16" height="16" viewBox="0 0 16 16"><rect width="16" height="16" rx="1" fill="#f00" /><polygon points=${STAR} fill="#fff" /></svg>
          <span style="margin-left:1px">办公之星 - [Ost1]</span>
          <div class="win-btns">
            <svg width="10" height="10" viewBox="0 0 10 10"><path d="M0 5h10" stroke="#888" /></svg>
            <svg width="10" height="10" viewBox="0 0 10 10"><path d="M.5 2.500h7v7h-7zM2.500 2.500v-2h7v7h-2" fill="none" stroke="#888" /></svg>
            <svg width="10" height="10" viewBox="0 0 10 10"><path d="M0 0l10 10M10 0L0 10" stroke="#888" /></svg>
          </div>
        </div>
        <div class="menubar">
          <svg width="16" height="16" viewBox="0 0 16 16"><path d="M3.500 1.500h9l2 2v12h-11z" fill="#fff" stroke="#000" /><rect y="1" width="9" height="9" fill="#f00" /><polygon points="4.500,2 5.500,4.500 8,4.500 6,6 6.800,9 4.500,7.300 2.200,9 3,6 1,4.500 3.500,4.500" fill="#fff" /></svg>
          ${MENUS.map(([m, w]) => html`<span class="menu" style="width:${w}px">${m}</span>`)}
          <div class="mdi">
            <span><svg width="10" height="10" viewBox="0 0 10 10"><path d="M2 8h6" stroke="#8a94a0" stroke-width="2" /></svg></span>
            <span><svg width="10" height="10" viewBox="0 0 10 10"><path d="M1.500 4.500h5v4h-5zM3.500 3V1.500h5v4H7" fill="none" stroke="#8a94a0" /></svg></span>
            <span><svg width="10" height="10" viewBox="0 0 10 10"><path d="M2 2l6 6M8 2l-6 6" stroke="#8a94a0" stroke-width="2" /></svg></span>
          </div>
        </div>
        <div class="bars">${this.toolbarOne()}${this.toolbarTwo()}${this.toolbarThree()}</div>
        <div class="work">
          <div class="side">
            <div class="tree"></div>
            <div class="stabs"><div class="stab">文件库</div><div class="stab off">百宝箱</div></div>
          </div>
          <div class="main">
            ${this.ruler()}
            <div class="canvas">
              <div class="doc">
                <div class="page">
                  <div class="mark l"></div>
                  <div class="mark r"></div>
                  ${this.stamp()}
                </div>
              </div>
              <div class="vs">
                <div class="sb"><svg width="9" height="5"><path d="M4.500 0L9 5H0z" /></svg></div>
                <div class="thumb"></div>
                <div class="fillup"></div>
                <div class="sb"><svg width="9" height="5"><path d="M0 0h9L4.500 5z" /></svg></div>
              </div>
            </div>
            <div class="tabs">
              <div class="tabs-l">
                <div class="hb"><svg width="5" height="9"><path d="M5 0v9L0 4.500z" /></svg></div>
                <div class="hb"><svg width="5" height="9"><path d="M0 0v9l5-4.500z" /></svg></div>
                <svg class="slash" width="4" height="18"><path d="M0 3l4 13" stroke="#000" /></svg>
                <div class="sheet">sheet1</div>
                <svg width="6" height="18"><path d="M0 17L6 2" stroke="#000" /></svg>
                <div class="grow"></div>
                <div class="hgrip"></div>
                <div class="hb"><svg width="5" height="9"><path d="M5 0v9L0 4.500z" fill="#909090" /></svg></div>
              </div>
              <svg class="grip-r" width="12" height="12" viewBox="0 0 12 12"><path d="M1 12L12 1M5 12l7-7M9 12l3-3" stroke="#a0a0a0" /></svg>
            </div>
          </div>
        </div>
        <div class="status">
          <div class="task">
            <svg width="16" height="16" viewBox="0 0 16 16"><path d="M4.500 1.500h8l2 2v12h-10z" fill="#fff" stroke="#000" /><rect y="4" width="9" height="9" fill="#f00" /><polygon points="4.500,5 5.500,7.500 8,7.500 6,9 6.800,12 4.500,10.300 2.200,12 3,9 1,7.500 3.500,7.500" fill="#fff" /></svg>
            <span>Ost1</span>
          </div>
        </div>
      </div>
      <stamp-dialog></stamp-dialog>
      <div class="popup">
        <div class="auto">自动</div>
        <div class="hr"></div>
        <div class="sw">
          ${SWATCHES.map((c, i) => html`<i class=${i === 13 ? 'sel' : ''} style="background:${c}"></i>`)}
        </div>
        <div class="band"><i></i></div>
        <div class="more">其它颜色...</div>
      </div>
      ${this.overlays()}
      ${this.upload()}
    `;
  }
}
